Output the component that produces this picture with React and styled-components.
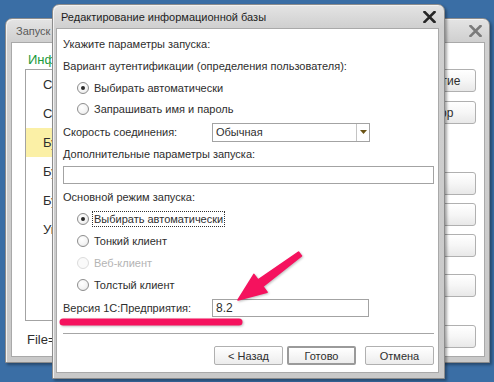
import React from 'react';
import styled, { createGlobalStyle } from 'styled-components';

const GlobalStyle = createGlobalStyle`
  html, body {
    margin: 0;
    padding: 0;
    background: #3a6ea5;
  }
  * {
    box-sizing: border-box;
  }
`;

const listItems = [
  'Сервер предприятия',
  'Склад',
  'Бухгалтерия предприятия',
  'Бухгалтерия (демо)',
  'Бухгалтерия КОРП',
  'Управление торговлей',
];

const backButtons = [
  { label: '1С:Предприятие', top: 19 },
  { label: 'Конфигуратор', top: 9 },
  { label: 'Добавить', top: 48 },
  { label: 'Изменить', top: 8 },
  { label: 'Удалить', top: 8 },
  { label: 'Настройка', top: 17 },
  { label: 'Выход', top: 28 },
];

const CloseIcon = ({ color }) => (
  <svg width="13" height="12" viewBox="0 0 13 12">
    <path d="M1.5 1 L11.5 11 M11.5 1 L1.5 11" stroke={color} strokeWidth="2.6" strokeLinecap="square" />
  </svg>
);

const App = () => {
  return (
    <>
      <GlobalStyle />
      <Desktop>
        <Win $x={5} $y={18} $w={485} $h={345}>
          <TitleBar>
            <Title $inactive>Запуск 1С:Предприятия</Title>
            <CloseBtn>
              <CloseIcon color="#7a7a7a" />
            </CloseBtn>
          </TitleBar>
          <BackClient>
            <BackMain>
              <Heading>Информационные базы</Heading>
              <List>
                {listItems.map((item, i) => (
                  <ListRow key={item} $selected={i === 2}>
                    {item}
                  </ListRow>
                ))}
              </List>
              <FileLine>File="C:\Base\Buh";</FileLine>
            </BackMain>
            <BackButtons>
              {backButtons.map((b) => (
                <SideButton key={b.label} $top={b.top}>
                  {b.label}
                </SideButton>
              ))}
            </BackButtons>
          </BackClient>
        </Win>

        <Win $x={52} $y={4} $w={393} $h={375} $front>
          <TitleBar>
            <Title>Редактирование информационной базы</Title>
            <CloseBtn>
              <CloseIcon color="#262626" />
            </CloseBtn>
          </TitleBar>
          <Client>
            <Row $h={22}>Укажите параметры запуска:</Row>
            <Row $h={22}>Вариант аутентификации (определения пользователя):</Row>
            <RadioRow $h={21}>
              <Radio $checked />
              <RadioLabel>Выбирать автоматически</RadioLabel>
            </RadioRow>
            <RadioRow $h={22}>
              <Radio />
              <RadioLabel>Запрашивать имя и пароль</RadioLabel>
            </RadioRow>
            <FieldRow $h={24}>
              <span>Скорость соединения:</span>
              <Select>
                <SelectValue>Обычная</SelectValue>
                <SelectButton>
                  <svg width="7" height="4" viewBox="0 0 7 4">
                    <path d="M0 0 H7 L3.5 4 Z" fill="#6b5416" />
                  </svg>
                </SelectButton>
              </Select>
            </FieldRow>
            <Row $h={20}>Дополнительные параметры запуска:</Row>
            <Row $h={22}>
              <TextInput />
            </Row>
            <Row $h={22}>Основной режим запуска:</Row>
            <RadioRow $h={22}>
              <Radio $checked />
              <RadioLabel $focused>Выбирать автоматически</RadioLabel>
            </RadioRow>
            <RadioRow $h={22}>
              <Radio />
              <RadioLabel>Тонкий клиент</RadioLabel>
            </RadioRow>
            <RadioRow $h={22}>
              <Radio $disabled />
              <RadioLabel $disabled>Веб-клиент</RadioLabel>
            </RadioRow>
            <RadioRow $h={22}>
              <Radio />
              <RadioLabel>Толстый клиент</RadioLabel>
            </RadioRow>
            <FieldRow $h={23}>
              <span>Версия 1С:Предприятия:</span>
              <VersionInput>8.2</VersionInput>
            </FieldRow>
            <Separator />
            <ButtonBar>
              <DlgButton>&lt; Назад</DlgButton>
              <DlgButton $default>Готово</DlgButton>
              <DlgButton $gap>Отмена</DlgButton>
            </ButtonBar>
          </Client>
        </Win>

        <Annotation width="494" height="382" viewBox="0 0 494 382">
          <line x1="63" y1="322" x2="239" y2="322" stroke="#f5125e" strokeWidth="7" strokeLinecap="round" />
          <polygon
            points="301.5,256 298.5,252 258.1,279.9 253.9,274.4 238,300 267.1,292.2 262.9,286.5"
            fill="#f5125e"
            stroke="#f5125e"
            strokeWidth="1.5"
            strokeLinejoin="round"
          />
        </Annotation>
      </Desktop>
    </>
  );
};

export default App;

const Desktop = styled.div`
  position: relative;
  width: 494px;
  height: 382px;
  overflow: hidden;
  background: #3a6ea5;
  font-family: 'Liberation Sans', Arial, sans-serif;
  font-size: 11px;
  color: #2e2e2e;
`;

const Win = styled.div`
  position: absolute;
  left: ${({ $x }) => $x}px;
  top: ${({ $y }) => $y}px;
  width: ${({ $w }) => $w}px;
  height: ${({ $h }) => $h}px;
  display: flex;
  flex-direction: column;
  padding: 0 ${({ $front }) => ($front ? '5px 5px 3px' : '4px 5px 5px')};
  border: 1px solid #8c8c8c;
  border-radius: 7px 7px 0 0;
  background: linear-gradient(to bottom, #e4e4e4 0px, #d0d0d0 22px, #c9c9c9 100%);
  box-shadow: 2px 2px 3px rgba(0, 0, 0, 0.35), inset 1px 1px 0 #f2f2f2;
`;

const TitleBar = styled.div`
  height: 23px;
  display: flex;
  align-items: center;
  justify-content: space-between;
  padding: 1px 3px 0 5px;
`;

const Title = styled.div`
  font-size: 11px;
  color: ${({ $inactive }) => ($inactive ? '#5a5a5a' : '#1e1e1e')};
  white-space: nowrap;
  overflow: hidden;
`;

const CloseBtn = styled.div`
  display: flex;
  align-items: center;
`;

const Client = styled.div`
  flex: 1;
  background: #fff;
  border: 1px solid #a9a9a9;
  display: flex;
  flex-direction: column;
  padding: 4px 4px 0 6px;
  min-height: 0;
`;

const Row = styled.div`
  height: ${({ $h }) => $h}px;
  display: flex;
  align-items: center;
  white-space: nowrap;
`;

const RadioRow = styled(Row)`
  padding-left: 14px;
`;

const Radio = styled.span`
  width: 12px;
  height: 12px;
  border-radius: 50%;
  flex-shrink: 0;
  border: 1px solid ${({ $disabled }) => ($disabled ? '#dcdcdc' : '#8d8d8d')};
  background: ${({ $disabled }) =>
    $disabled ? '#fafafa' : 'radial-gradient(circle at 40% 35%, #ffffff 0%, #f4f4f4 55%, #dedede 100%)'};
  display: flex;
  align-items: center;
  justify-content: center;

  &::after {
    content: '';
    display: ${({ $checked }) => ($checked ? 'block' : 'none')};
    width: 4px;
    height: 4px;
    border-radius: 50%;
    background: #2a2a2a;
  }
`;

const RadioLabel = styled.span`
  margin-left: ${({ $focused }) => ($focused ? '3px' : '5px')};
  padding: ${({ $focused }) => ($focused ? '1px 1px' : '0')};
  border: ${({ $focused }) => ($focused ? '1px dotted #333' : 'none')};
  color: ${({ $disabled }) => ($disabled ? '#b4b4b4' : 'inherit')};
`;

const FieldRow = styled(Row)`
  display: grid;
  grid-template-columns: 149px auto;
  align-items: center;
`;

const Select = styled.div`
  width: 158px;
  height: 19px;
  border: 1px solid #a3a3a3;
  display: flex;
  align-items: stretch;
`;

const SelectValue = styled.div`
  flex: 1;
  display: flex;
  align-items: center;
  padding-left: 3px;
`;

const SelectButton = styled.div`
  width: 13px;
  border-left: 1px solid #c4c4c4;
  display: flex;
  align-items: center;
  justify-content: center;
`;

const TextInput = styled.div`
  width: 100%;
  height: 18px;
  border: 1px solid #a3a3a3;
`;

const VersionInput = styled.div`
  width: 157px;
  height: 18px;
  border: 1px solid #a3a3a3;
  display: flex;
  align-items: center;
  padding-left: 3px;
  font-size: 12px;
`;

const Separator = styled.div`
  margin-top: 14px;
  height: 1px;
  background: #a6a6a6;
`;

const ButtonBar = styled.div`
  margin-top: 12px;
  display: flex;
  justify-content: flex-end;
  gap: 4px;
`;

const DlgButton = styled.div`
  width: 69px;
  height: 19px;
  display: flex;
  align-items: center;
  justify-content: center;
  margin-left: ${({ $gap }) => ($gap ? '5px' : '0')};
  border: ${({ $default }) => ($default ? '2px solid #9a9a9a' : '1px solid #b0b0b0')};
  border-radius: 2px;
  background: linear-gradient(to bottom, #ffffff 0%, #f6f6f6 50%, #ececec 100%);
`;

const BackClient = styled.div`
  flex: 1;
  background: #fff;
  border: 1px solid #a9a9a9;
  display: flex;
  padding: 7px 8px 0 13px;
  min-height: 0;
`;

const BackMain = styled.div`
  flex: 1;
  display: flex;
  flex-direction: column;
  min-width: 0;
`;

const Heading = styled.div`
  height: 18px;
  display: flex;
  align-items: center;
  padding-left: 3px;
  font-size: 13px;
  color: #1a9a3c;
  white-space: nowrap;
`;

const List = styled.div`
  height: 252px;
  margin-top: 1px;
  border: 1px solid #a3a3a3;
  display: flex;
  flex-direction: column;
`;

const ListRow = styled.div`
  height: 29px;
  flex-shrink: 0;
  display: flex;
  align-items: center;
  padding-left: 17px;
  font-size: 13px;
  white-space: nowrap;
  background: ${({ $selected }) => ($selected ? '#fbf0a6' : 'transparent')};
`;

const FileLine = styled.div`
  margin-top: 9px;
  height: 18px;
  display: flex;
  align-items: center;
  padding-left: 2px;
  font-size: 13px;
  white-space: nowrap;
`;

const BackButtons = styled.div`
  width: 124px;
  margin-left: 12px;
  display: flex;
  flex-direction: column;
`;

const SideButton = styled.div`
  margin-top: ${({ $top }) => $top}px;
  height: 23px;
  display: flex;
  align-items: center;
  justify-content: center;
  border: 1px solid #b0b0b0;
  border-radius: 3px;
  background: linear-gradient(to bottom, #ffffff 0%, #f6f6f6 50%, #e8e8e8 100%);
  white-space: nowrap;
  font-size: 12px;
`;

const Annotation = styled.svg`
  position: absolute;
  left: 0;
  top: 0;
  pointer-events: none;
  filter: drop-shadow(1px 1px 1px rgba(0, 0, 0, 0.25));
`;
